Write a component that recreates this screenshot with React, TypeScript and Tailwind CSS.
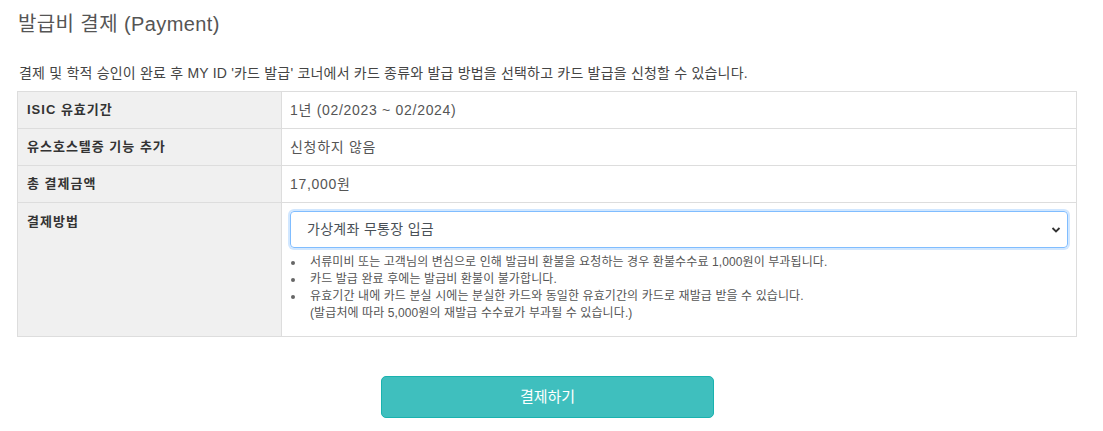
import React from "react";

function Bullet({ children }: { children: React.ReactNode }) {
  return (
    <li className="flex">
      <span className="w-[20px] shrink-0 flex items-start pt-[7px]">
        <span className="ml-[1px] w-[4px] h-[4px] rounded-full bg-[#666]" />
      </span>
      <div>{children}</div>
    </li>
  );
}

export default function App() {
  const font = { fontFamily: '"Liberation Sans", "Noto Sans CJK KR", sans-serif' };
  return (
    <div className="w-[1103px] h-[431px] bg-white text-[#555]" style={font}>
      <div className="pl-[18px] pr-[26px] pt-[10px]">
        <h2 className="text-[20px] leading-[28px] text-[#555] font-normal tracking-[0.4px]">발급비 결제 (Payment)</h2>
        <p className="mt-[26px] text-[14px] leading-[18px] text-[#444] pl-[1px] tracking-[0.2px]">
          결제 및 학적 승인이 완료 후 MY ID '카드 발급' 코너에서 카드 종류와 발급 방법을 선택하고 카드 발급을 신청할 수 있습니다.
        </p>
        <table className="mt-[9px] -ml-[1px] w-[1060px] border-collapse border border-[#ddd] text-[13px]">
          <tbody>
            <tr className="h-[37px]">
              <th className="w-[265px] bg-[#f0f0f0] border border-[#ddd] text-left font-bold pl-[9px] text-[#333] tracking-[1px]">ISIC 유효기간</th>
              <td className="border border-[#ddd] pl-[8px] text-[14px] text-[#555] tracking-[0.7px]">1년 (02/2023 ~ 02/2024)</td>
            </tr>
            <tr className="h-[37px]">
              <th className="bg-[#f0f0f0] border border-[#ddd] text-left font-bold pl-[9px] text-[#333] tracking-[1px]">유스호스텔증 기능 추가</th>
              <td className="border border-[#ddd] pl-[8px] text-[14px] text-[#555] tracking-[0.7px]">신청하지 않음</td>
            </tr>
            <tr className="h-[37px]">
              <th className="bg-[#f0f0f0] border border-[#ddd] text-left font-bold pl-[9px] text-[#333] tracking-[1px]">총 결제금액</th>
              <td className="border border-[#ddd] pl-[8px] text-[14px] text-[#555] tracking-[0.7px]">17,000원</td>
            </tr>
            <tr className="h-[134px]">
              <th className="bg-[#f0f0f0] border border-[#ddd] text-left align-top font-bold pl-[9px] pt-[9px] text-[#333] tracking-[1px]">결제방법</th>
              <td className="border border-[#ddd] align-top pl-[8px] pr-[8px] pt-[8px] pb-[12px]">
                <div className="relative h-[37px] w-[778px] rounded-[4px] border border-[#80bdff] shadow-[0_0_0_2px_rgba(0,123,255,0.18)] flex items-center pl-[16px]">
                  <span className="text-[14px] text-[#495057] tracking-[0.3px]">가상계좌 무통장 입금</span>
                  <svg className="absolute right-[6px] top-[14px]" width="10" height="8" viewBox="0 0 10 8">
                    <path d="M1.5 2 L5 5.5 L8.5 2" stroke="#333" strokeWidth="1.8" fill="none" />
                  </svg>
                </div>
                <ul className="mt-[6px] text-[12px] leading-[17px] text-[#555] tracking-[0.1px]">
                  <Bullet>서류미비 또는 고객님의 변심으로 인해 발급비 환불을 요청하는 경우 환불수수료 1,000원이 부과됩니다.</Bullet>
                  <Bullet>카드 발급 완료 후에는 발급비 환불이 불가합니다.</Bullet>
                  <Bullet>
                    유효기간 내에 카드 분실 시에는 분실한 카드와 동일한 유효기간의 카드로 재발급 받을 수 있습니다.
                    <br />
                    (발급처에 따라 5,000원의 재발급 수수료가 부과될 수 있습니다.)
                  </Bullet>
                </ul>
              </td>
            </tr>
          </tbody>
        </table>
        <div className="flex justify-center mt-[39px]">
          <button className="w-[333px] h-[42px] rounded-[5px] bg-[#3fbfbe] border border-[#1ab2af] text-white text-[15px]">
            결제하기
          </button>
        </div>
      </div>
    </div>
  );
}
